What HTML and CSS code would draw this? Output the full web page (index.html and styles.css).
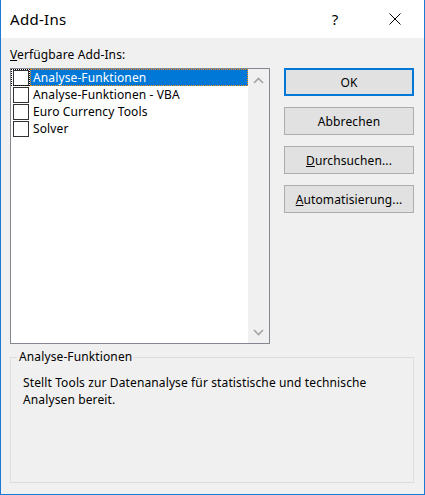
FILE: index.html
```html
<!DOCTYPE html>
<html lang="de">
<head>
<meta charset="utf-8">
<title>Add-Ins</title>
<link rel="stylesheet" href="styles.css">
</head>
<body>
<div class="window">
  <div class="titlebar">
    <div class="title">Add-Ins</div>
    <div class="tb-btn help">?</div>
    <div class="tb-btn close">
      <svg width="12" height="12" viewBox="0 0 12 12"><path d="M0.5 0.5 L11.5 11.5 M11.5 0.5 L0.5 11.5" stroke="#000" stroke-width="1" fill="none"/></svg>
    </div>
  </div>
  <div class="content">
    <div class="label"><u>V</u>erfügbare Add-Ins:</div>
    <div class="main">
      <div class="listbox">
        <div class="rows">
          <div class="row focus">
            <div class="cb-cell"><div class="cb"></div></div>
            <div class="item sel">Analyse-Funktionen</div>
          </div>
          <div class="row">
            <div class="cb-cell"><div class="cb"></div></div>
            <div class="item">Analyse-Funktionen - VBA</div>
          </div>
          <div class="row">
            <div class="cb-cell"><div class="cb"></div></div>
            <div class="item">Euro Currency Tools</div>
          </div>
          <div class="row">
            <div class="cb-cell"><div class="cb"></div></div>
            <div class="item">Solver</div>
          </div>
        </div>
        <div class="scrollbar">
          <div class="arrow">
            <svg width="11" height="7" viewBox="0 0 11 7"><path d="M1 6 L5.5 1.5 L10 6" stroke="#a3a3a3" stroke-width="1.6" fill="none"/></svg>
          </div>
          <div class="arrow">
            <svg width="11" height="7" viewBox="0 0 11 7"><path d="M1 1 L5.5 5.5 L10 1" stroke="#a3a3a3" stroke-width="1.6" fill="none"/></svg>
          </div>
        </div>
      </div>
      <div class="buttons">
        <div class="btn default">OK</div>
        <div class="btn">Abbrechen</div>
        <div class="btn"><u>D</u>urchsuchen...</div>
        <div class="btn"><u>A</u>utomatisierung...</div>
      </div>
    </div>
    <fieldset class="group">
      <legend class="legend">Analyse-Funktionen</legend>
      <p class="desc">Stellt Tools zur Datenanalyse für statistische und technische Analysen bereit.</p>
    </fieldset>
  </div>
</div>
</body>
</html>
```
FILE: styles.css
```css
html, body {
  margin: 0;
  padding: 0;
  background: #f0f0f0;
}
.window {
  width: 425px;
  height: 495px;
  box-sizing: border-box;
  border: 1px solid #1a7ad4;
  border-top: none;
  background: #f0f0f0;
  display: flex;
  flex-direction: column;
  font-family: "Noto Sans", "Open Sans", sans-serif;
  font-size: 12px;
  letter-spacing: 0.12px;
  color: #000;
}
.titlebar {
  height: 38px;
  flex: none;
  background: #fff;
  display: flex;
  align-items: center;
  padding: 0 6px 0 9px;
}
.title {
  flex: 1;
  font-size: 15px;
  letter-spacing: 0.3px;
  line-height: 38px;
}
.tb-btn {
  width: 46px;
  height: 38px;
  display: flex;
  align-items: center;
  justify-content: center;
}
.help {
  font-size: 15px;
  margin-right: 14px;
}
.close svg {
  display: block;
}
.content {
  flex: 1;
  display: flex;
  flex-direction: column;
  padding: 9px 10px 11px 9px;
  min-height: 0;
}
.label {
  line-height: 16px;
  height: 16px;
}
.main {
  display: flex;
  margin-top: 5px;
  gap: 14px;
}
.listbox {
  width: 260px;
  height: 276px;
  box-sizing: border-box;
  border: 1px solid #828790;
  background: #fff;
  display: flex;
}
.rows {
  flex: 1;
  display: flex;
  flex-direction: column;
}
.row {
  display: flex;
  height: 17px;
  line-height: 17px;
}
.cb-cell {
  width: 19px;
  box-sizing: border-box;
  padding: 1px 0 0 2px;
}
.row.focus .cb-cell {
  outline: 1px dotted #000;
  outline-offset: -1px;
}
.cb {
  width: 16px;
  height: 16px;
  box-sizing: border-box;
  border: 1px solid #333;
  background: #fff;
}
.item {
  padding-left: 3px;
  white-space: nowrap;
}
.item.sel {
  flex: 1;
  background: #0078d7;
  color: #fff;
  outline: 1px dotted #ff8c00;
  outline-offset: -1px;
}
.scrollbar {
  width: 21px;
  flex: none;
  background: #f0f0f0;
  display: flex;
  flex-direction: column;
  justify-content: space-between;
}
.arrow {
  height: 22px;
  display: flex;
  align-items: center;
  justify-content: center;
}
.arrow svg {
  display: block;
}
.buttons {
  display: flex;
  flex-direction: column;
  gap: 11px;
}
.btn {
  width: 130px;
  height: 28px;
  box-sizing: border-box;
  border: 1px solid #adadad;
  background: #e1e1e1;
  display: flex;
  align-items: center;
  justify-content: center;
  padding-top: 1px;
}
.btn.default {
  border: 2px solid #0078d7;
}
.group {
  flex: 1;
  margin: 5px 0 0 0;
  padding: 0;
  border: 1px solid #dcdcdc;
  width: 404px;
  box-sizing: border-box;
  min-width: 0;
}
.legend {
  margin-left: 6px;
  padding: 0 2px;
  line-height: 16px;
}
.desc {
  margin: 9px 10px 0 12px;
  line-height: 17px;
}
```
